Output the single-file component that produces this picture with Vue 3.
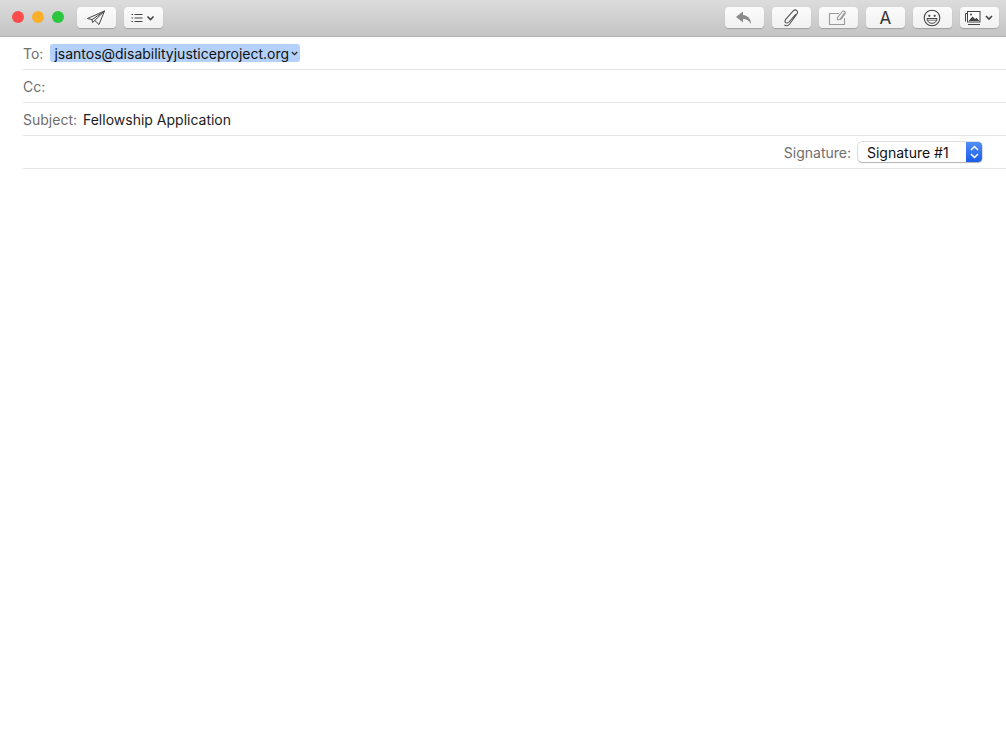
<template>
  <div class="window">
    <header class="toolbar">
      <div class="lights">
        <span class="light red"></span>
        <span class="light yellow"></span>
        <span class="light green"></span>
      </div>
      <button class="tool first">
        <svg width="20" height="16" viewBox="0 0 20 16" fill="none" stroke="#444" stroke-width="1" stroke-linejoin="round">
          <path d="M1.5 8.5 18.5 1 13 14.5 8.8 10.5 6.5 12.5 6 9.6Z" />
          <path d="M6 9.6 18.5 1 8.8 10.5" />
        </svg>
      </button>
      <button class="tool">
        <svg width="24" height="12" viewBox="0 0 24 12" fill="none" stroke="#444">
          <path d="M3.5 2.5h8M3.5 6h8M3.5 9.5h8" />
          <path d="M.5 2.5h1.5M.5 6h1.5M.5 9.5h1.5" />
          <path d="M16.5 4.5 19.5 7.5 22.5 4.5" stroke-width="1.6" />
        </svg>
      </button>
      <div class="spacer"></div>
      <button class="tool">
        <svg width="18" height="14" viewBox="0 0 18 14">
          <path d="M8 .5 1 6l7 5.5V8c3.6 0 6 1.400 8 5 0-5-3-8.500-8-9Z" fill="#8a8a8a" />
        </svg>
      </button>
      <button class="tool">
        <svg width="16" height="18" viewBox="0 0 16 18" fill="none" stroke="#555" stroke-width="1.100" stroke-linecap="round">
          <path d="M12.500 5.500 6 13c-1 1.200-2.700 1.300-3.400.5-.8-.8-.6-2.200.3-3.300L10 2.200c1.200-1.300 2.800-1.500 3.800-.6 1 1 .8 2.500-.3 3.800L6.700 15c-1.600 1.800-3.800 2.300-5 1.100" />
        </svg>
      </button>
      <button class="tool">
        <svg width="20" height="16" viewBox="0 0 20 16" fill="none" stroke="#9a9a9a" stroke-width="1.100">
          <path d="M11 3.500H1.500v11h15V8" />
          <path d="M16.500 3 12 9c-.8 1-2 1-2.500.5-.5-.6-.3-1.500.3-2.300L14 2c.8-1 2-1.200 2.800-.5.8.7.7 1.800 0 2.800L12.500 10" />
        </svg>
      </button>
      <button class="tool letter">A</button>
      <button class="tool">
        <svg width="18" height="18" viewBox="0 0 18 18" fill="none" stroke="#444">
          <circle cx="9" cy="9" r="7.800" stroke-width="1.100" />
          <circle cx="6.300" cy="6.800" r="1.100" fill="#444" stroke="none" />
          <circle cx="11.700" cy="6.800" r="1.100" fill="#444" stroke="none" />
          <path d="M4 9.500h10c0 3-2.200 4.800-5 4.800s-5-1.800-5-4.800Z" fill="#fff" />
          <path d="M4.500 11.200h9" stroke-width=".8" />
        </svg>
      </button>
      <button class="tool last">
        <svg width="28" height="14" viewBox="0 0 28 14" fill="none" stroke="#444">
          <path d="M.5 10.500v-8h2" />
          <rect x="2.500" y=".5" width="12.500" height="10.500" fill="#fff" />
          <path d="M3 13.500h12" />
          <path d="M3.500 10 7.500 5.500l2.500 2.500 1.500-1.300L14.500 10Z" fill="#444" stroke="none" />
          <circle cx="6" cy="3.500" r="1" fill="#444" stroke="none" />
          <path d="M21 5 24 8 27 5" stroke-width="1.600" />
        </svg>
      </button>
    </header>

    <div class="fields">
      <div class="row">
        <span class="label">To:</span>
        <span class="token">jsantos@disabilityjusticeproject.org<svg width="7" height="5" viewBox="0 0 7 5" fill="none" stroke="#222" stroke-width="1.200"><path d="M.8 1 3.500 3.700 6.200 1" /></svg></span>
      </div>
      <div class="row">
        <span class="label">Cc:</span>
      </div>
      <div class="row">
        <span class="label">Subject:</span>
        <span class="subject">Fellowship Application</span>
      </div>
      <div class="row signature">
        <span class="label">Signature:</span>
        <div class="select">
          <span class="select-text">Signature #1</span>
          <span class="stepper">
            <svg width="9" height="14" viewBox="0 0 9 14" fill="none" stroke="#fff" stroke-width="1.500">
              <path d="M1 5 4.500 1.500 8 5M1 9l3.500 3.500L8 9" />
            </svg>
          </span>
        </div>
      </div>
    </div>
  </div>
</template>

<script setup>
</script>

<style>
html, body {
  background: #fff;
}
</style>

<style scoped>
.window {
  width: 1006px;
  height: 737px;
  background: #fff;
  overflow: hidden;
  font-family: Inter, "Liberation Sans", sans-serif;
  font-size: 14px;
}

.toolbar {
  display: flex;
  align-items: flex-start;
  height: 36px;
  padding: 7px 7px 0 11px;
  box-sizing: border-box;
  gap: 7.500px;
  background: linear-gradient(#dcdcdc, #c4c4c4);
  border-bottom: 1px solid #b0b0b0;
  box-sizing: content-box;
  height: 29px;
}

.lights {
  display: flex;
  gap: 8px;
  padding: 4px 5px 0 1px;
}

.light {
  width: 12px;
  height: 12px;
  border-radius: 50%;
}

.red { background: #fb4d4b; }
.yellow { background: #fcb02a; }
.green { background: #2ac73f; }

.tool {
  display: flex;
  align-items: center;
  justify-content: center;
  width: 39.500px;
  height: 21px;
  padding: 0;
  border: none;
  border-radius: 4px;
  background: linear-gradient(#fbfbfb, #f1f1f1);
  box-shadow: 0 1px 1px rgba(0, 0, 0, 0.2);
}

.first {
  margin-left: 0;
}

.letter {
  font-family: Inter, sans-serif;
  font-size: 17px;
  color: #333;
}

.spacer {
  flex: 1;
}

.fields {
  padding-left: 23px;
}

.row {
  display: flex;
  align-items: center;
  height: 32px;
  border-bottom: 1px solid #e4e4e4;
  box-sizing: content-box;
}

.label {
  color: #6e6e6e;
}

.token {
  display: flex;
  align-items: center;
  gap: 2px;
  margin-left: 7px;
  height: 18px;
  padding: 0 2px 0 4px;
  border-radius: 3px;
  background: #b3d1fb;
  color: #111;
}

.subject {
  margin-left: 6px;
  color: #1c1c1c;
}

.signature {
  justify-content: flex-end;
  padding-right: 24px;
}

.select {
  display: flex;
  align-items: center;
  justify-content: space-between;
  width: 124px;
  height: 20px;
  margin-left: 7px;
  border-radius: 4px;
  background: #fff;
  box-shadow: 0 0 0 .5px rgba(0, 0, 0, 0.25), 0 1px 1px rgba(0, 0, 0, 0.2);
}

.select-text {
  padding-left: 9px;
  color: #111;
}

.stepper {
  display: flex;
  align-items: center;
  justify-content: center;
  width: 16px;
  height: 20px;
  border-radius: 0 4px 4px 0;
  background: linear-gradient(#4f8ff7, #1a5ce8);
}
</style>
